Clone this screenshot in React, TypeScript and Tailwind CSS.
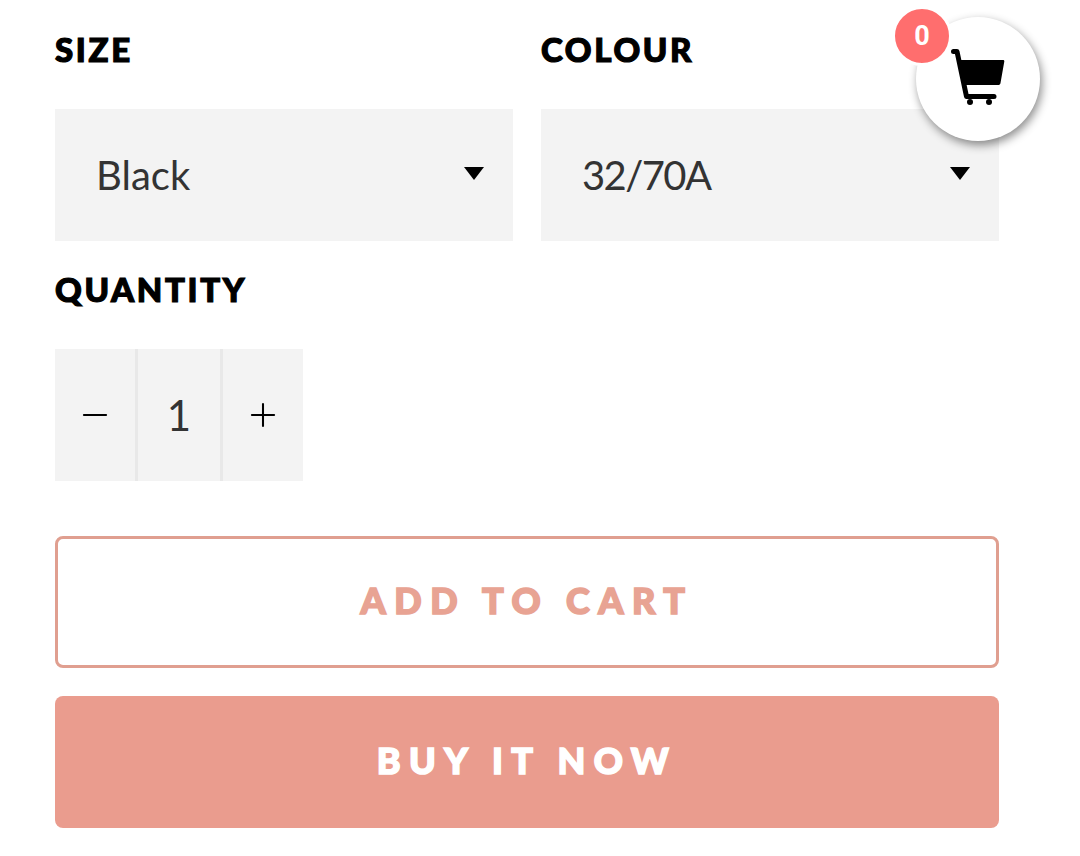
import { Minus, Plus } from 'lucide-react'

function Label({ children }: { children: string }) {
  return <div className="h-[28px] text-[33px] leading-[28px] font-black text-black tracking-[0.08em] [-webkit-text-stroke:1.2px_#000]">{children}</div>
}

function Select({ value, tight }: { value: string; tight?: boolean }) {
  return (
    <div className="mt-[46px] h-[132px] bg-[#f3f3f3] flex items-center justify-between pl-[41px] pr-[29px]">
      <span className={tight ? 'text-[40px] text-[#333333] tracking-[-1.6px]' : 'text-[40px] text-[#333333]'}>{value}</span>
      <svg width="20" height="13" viewBox="0 0 20 13" className="-mt-[4px]">
        <path d="M0 0H20L10 13Z" fill="#000" />
      </svg>
    </div>
  )
}

function CartIcon() {
  return (
    <svg width="56" height="58" viewBox="0 0 56 58" fill="none">
      <path d="M3.5 3.5H7L16.5 48.5H44" stroke="#000" strokeWidth="5" strokeLinecap="round" strokeLinejoin="round" />
      <path d="M10 12H53C54 12 54.5 12.6 54.3 13.6L50.5 35C50.2 36.5 49.5 37 48 37H15Z" fill="#000" />
      <circle cx="20" cy="54" r="3" fill="#000" />
      <circle cx="39" cy="54" r="3" fill="#000" />
    </svg>
  )
}

export default function App() {
  return (
    <div className="relative w-[1080px] h-[856px] bg-white overflow-hidden font-['Lato',sans-serif] pt-[35px] px-[55px]">
      <div className="w-[944px]">
        <div className="grid grid-cols-2 gap-x-[28px]">
          <div>
            <Label>SIZE</Label>
            <Select value="Black" />
          </div>
          <div>
            <Label>COLOUR</Label>
            <Select value="32/70A" tight />
          </div>
        </div>

        <div className="mt-[34px]">
          <Label>QUANTITY</Label>
        </div>
        <div className="mt-[46px] h-[132px] w-[248px] bg-[#f3f3f3] flex">
          <div className="w-[80px] flex items-center justify-center text-black">
            <Minus size={38} strokeWidth={1.3} />
          </div>
          <div className="w-[88px] border-x-[3px] border-[#e8e8e8] flex items-center justify-center text-[42px] text-[#333333]">1</div>
          <div className="w-[80px] flex items-center justify-center text-black">
            <Plus size={38} strokeWidth={1.3} />
          </div>
        </div>

        <button className="mt-[55px] w-full h-[132px] border-[3px] border-[#e09f90] rounded-[8px] bg-white pb-[4px] text-[36px] font-black tracking-[0.235em] text-[#e8a393] [-webkit-text-stroke:1.6px_#e8a393]">
          ADD TO CART
        </button>
        <button className="mt-[28px] w-full h-[132px] rounded-[8px] bg-[#ea9c8e] pb-[4px] text-[36px] font-black tracking-[0.235em] text-white [-webkit-text-stroke:1.6px_#fff] block">
          BUY IT NOW
        </button>
      </div>

      <div className="absolute left-[916px] top-[17px] w-[124px] h-[124px] rounded-full bg-white shadow-[2px_4px_10px_rgba(0,0,0,0.45)] flex items-center justify-center">
        <div className="mt-[-4px]">
          <CartIcon />
        </div>
      </div>
      <div className="absolute left-[892px] top-[6px] w-[60px] h-[60px] rounded-full bg-[#ff6e6e] border-[3px] border-white flex items-center justify-center font-['Roboto',sans-serif] font-bold text-[27px] text-white">
        0
      </div>
    </div>
  )
}
